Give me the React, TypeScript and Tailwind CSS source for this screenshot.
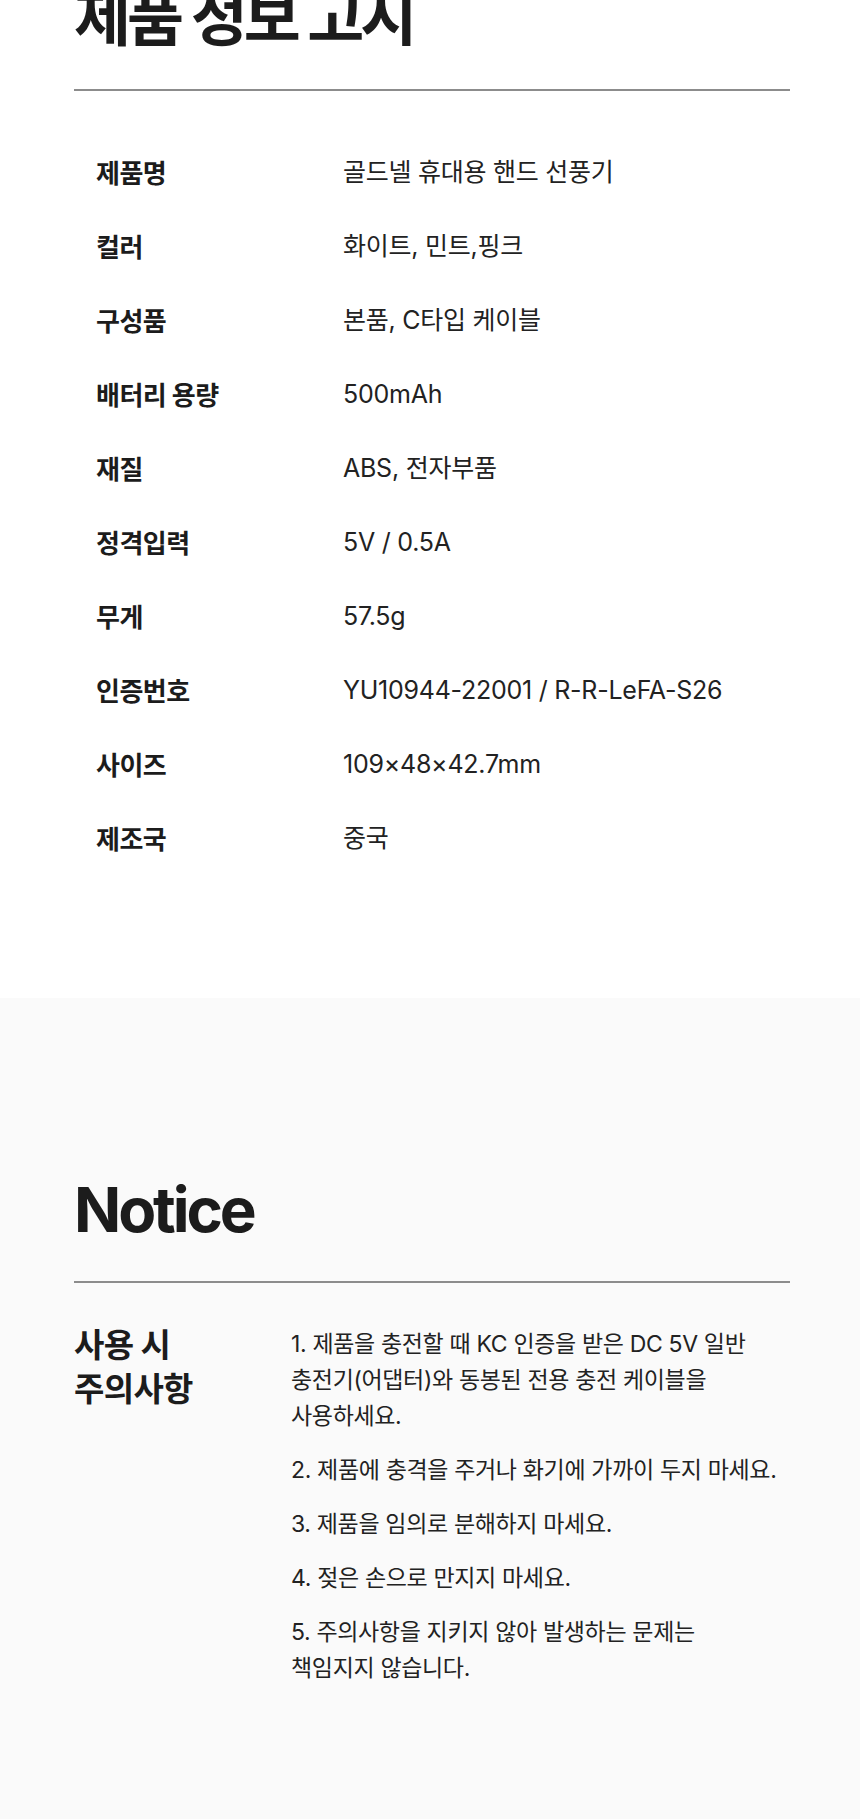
const specs: [string, string][] = [
  ["제품명", "골드넬 휴대용 핸드 선풍기"],
  ["컬러", "화이트, 민트,핑크"],
  ["구성품", "본품, C타입 케이블"],
  ["배터리 용량", "500mAh"],
  ["재질", "ABS, 전자부품"],
  ["정격입력", "5V / 0.5A"],
  ["무게", "57.5g"],
  ["인증번호", "YU10944-22001 / R-R-LeFA-S26"],
  ["사이즈", "109×48×42.7mm"],
  ["제조국", "중국"],
];

const notices: string[][] = [
  ["1. 제품을 충전할 때 KC 인증을 받은 DC 5V 일반", "충전기(어댑터)와 동봉된 전용 충전 케이블을", "사용하세요."],
  ["2. 제품에 충격을 주거나 화기에 가까이 두지 마세요."],
  ["3. 제품을 임의로 분해하지 마세요."],
  ["4. 젖은 손으로 만지지 마세요."],
  ["5. 주의사항을 지키지 않아 발생하는 문제는", "책임지지 않습니다."],
];

export default function App() {
  return (
    <div className="w-[860px] h-[1819px] overflow-hidden bg-white font-['Inter','Noto_Sans_CJK_KR',sans-serif] text-[#1c1c1c]">
      <section className="pl-[74px] pr-[70px] pb-[122px]">
        <h2 className="-mt-[12px] text-[62px] leading-[62px] font-bold tracking-[-0.065em] whitespace-nowrap">
          제품 정보 고시
        </h2>
        <div className="mt-[39px] h-[2px] bg-[#8c8c8c]" />

        <div className="pt-[45px]">
          {specs.map(([label, value]) => (
            <div key={label} className="flex h-[74px] items-center">
              <div className="w-[269px] pl-[22px] text-[26px] font-bold tracking-[-0.02em]">
                {label}
              </div>
              <div className="text-[25px] tracking-[-0.01em] text-[#222]">
                {value}
              </div>
            </div>
          ))}
        </div>
      </section>

      <section className="bg-[#fafafa] pl-[74px] pr-[70px] pt-[181px] pb-[140px]">
        <h2 className="text-[62px] leading-[62px] font-bold tracking-[-0.05em]">
          Notice
        </h2>
        <div className="mt-[40px] h-[2px] bg-[#8c8c8c]" />

        <div className="flex pt-[40px]">
          <div className="w-[217px] text-[33px] leading-[44px] font-bold tracking-[-0.02em]">
            사용 시
            <br />
            주의사항
          </div>
          <div className="mt-[3px] flex flex-col gap-[18px] text-[23px] leading-[36px] tracking-[-0.015em] text-[#222]">
            {notices.map((lines, i) => (
              <p key={i} className="whitespace-nowrap">
                {lines.map((line, j) => (
                  <span key={j}>
                    {j > 0 && <br />}
                    {line}
                  </span>
                ))}
              </p>
            ))}
          </div>
        </div>
      </section>
    </div>
  );
}
